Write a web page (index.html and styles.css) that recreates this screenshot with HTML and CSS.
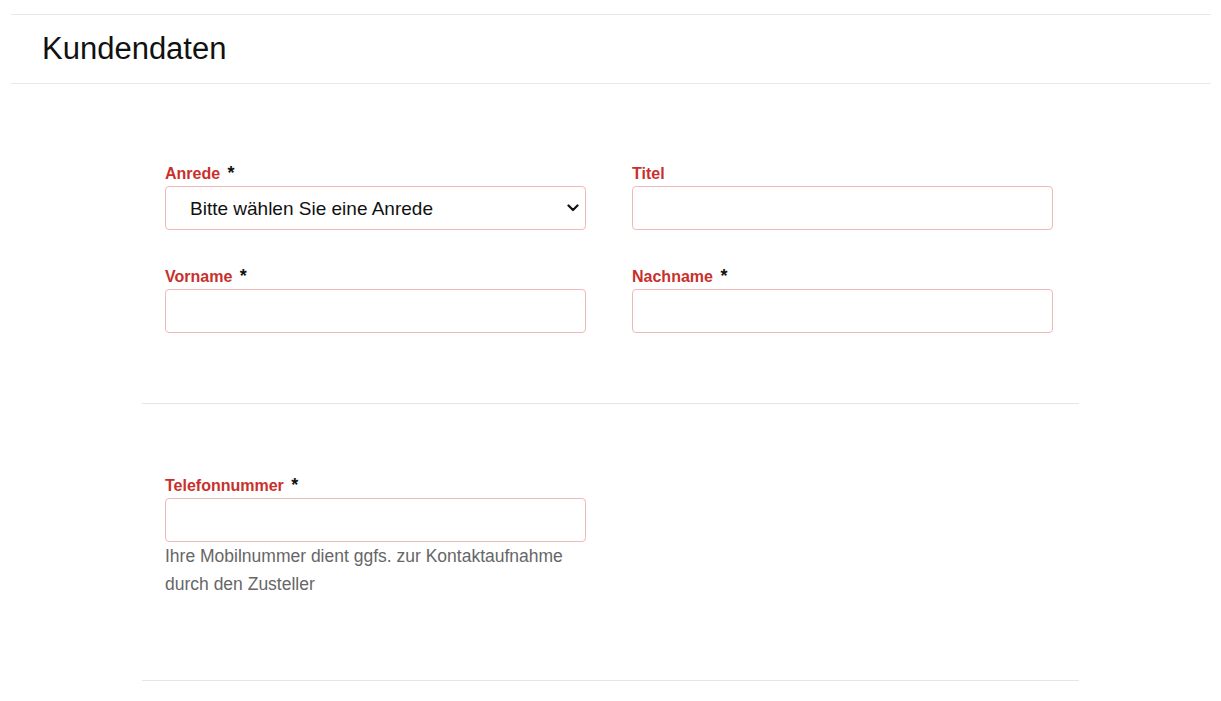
FILE: index.html
```html
<!DOCTYPE html>
<html lang="de">
<head>
<meta charset="utf-8">
<title>Kundendaten</title>
<link rel="stylesheet" href="styles.css">
</head>
<body>
<header class="page-header">
  <h1 class="page-title">Kundendaten</h1>
</header>
<form class="form">
  <section class="form-section section-first">
    <div class="grid">
      <div class="field">
        <label class="label" for="anrede">Anrede <span class="req">*</span></label>
        <div class="select-wrap">
          <select id="anrede" class="control select">
            <option>Bitte wählen Sie eine Anrede</option>
            <option>Herr</option>
            <option>Frau</option>
          </select>
          <svg class="chevron" width="12" height="8" viewBox="0 0 12 8"><path d="M1.5 1.5 L6 6 L10.5 1.5" fill="none" stroke="#111" stroke-width="2.2" stroke-linecap="round" stroke-linejoin="round"/></svg>
        </div>
      </div>
      <div class="field">
        <label class="label" for="titel">Titel</label>
        <input id="titel" class="control" type="text">
      </div>
      <div class="field">
        <label class="label" for="vorname">Vorname <span class="req">*</span></label>
        <input id="vorname" class="control" type="text">
      </div>
      <div class="field">
        <label class="label" for="nachname">Nachname <span class="req">*</span></label>
        <input id="nachname" class="control" type="text">
      </div>
    </div>
  </section>
  <section class="form-section section-second">
    <div class="grid">
      <div class="field">
        <label class="label" for="tel">Telefonnummer <span class="req">*</span></label>
        <input id="tel" class="control" type="tel">
        <p class="help">Ihre Mobilnummer dient ggfs. zur Kontaktaufnahme durch den Zusteller</p>
      </div>
    </div>
  </section>
</form>
</body>
</html>
```

FILE: styles.css
```css
* { box-sizing: border-box; }

html, body {
  margin: 0;
  padding: 0;
  background: #ffffff;
  font-family: "Liberation Sans", Arial, sans-serif;
  color: #111;
}

.page-header {
  margin: 14px 10px 0 11px;
  border-top: 1px solid #e8e8e8;
  border-bottom: 1px solid #e8e8e8;
  height: 70px;
  padding-left: 31px;
}

.page-title {
  margin: 0;
  font-weight: 400;
  font-size: 31px;
  line-height: 68px;
  color: #111;
}

.form {
  margin: 0 142px;
}

.form-section {
  border-bottom: 1px solid #e6e6e6;
  padding-left: 23px;
  padding-right: 26px;
}

.section-first {
  padding-top: 77px;
  padding-bottom: 70px;
}

.section-second {
  padding-top: 69px;
  padding-bottom: 82px;
}

.grid {
  display: grid;
  grid-template-columns: 1fr 1fr;
  column-gap: 46px;
  row-gap: 34px;
}

.field {
  display: flex;
  flex-direction: column;
}

.label {
  display: block;
  font-weight: 700;
  font-size: 16px;
  line-height: 22px;
  padding-top: 2px;
  margin-bottom: 1px;
  color: #c9302c;
}

.req {
  color: #111;
  font-size: 18px;
  line-height: 1;
  margin-left: 3px;
}

.control {
  display: block;
  width: 100%;
  height: 44px;
  margin: 0;
  border: 1px solid #f0b9b9;
  border-radius: 4px;
  background: #fff;
  font-family: "Liberation Sans", Arial, sans-serif;
  font-size: 19px;
  color: #111;
  padding: 0 12px;
  outline: none;
}

.select-wrap {
  position: relative;
}

.select {
  appearance: none;
  -webkit-appearance: none;
  padding-left: 24px;
  padding-right: 36px;
}

.chevron {
  position: absolute;
  right: 7px;
  top: 18px;
  pointer-events: none;
}

.help {
  margin: 0;
  font-size: 17.5px;
  line-height: 28px;
  color: #666;
}
```
